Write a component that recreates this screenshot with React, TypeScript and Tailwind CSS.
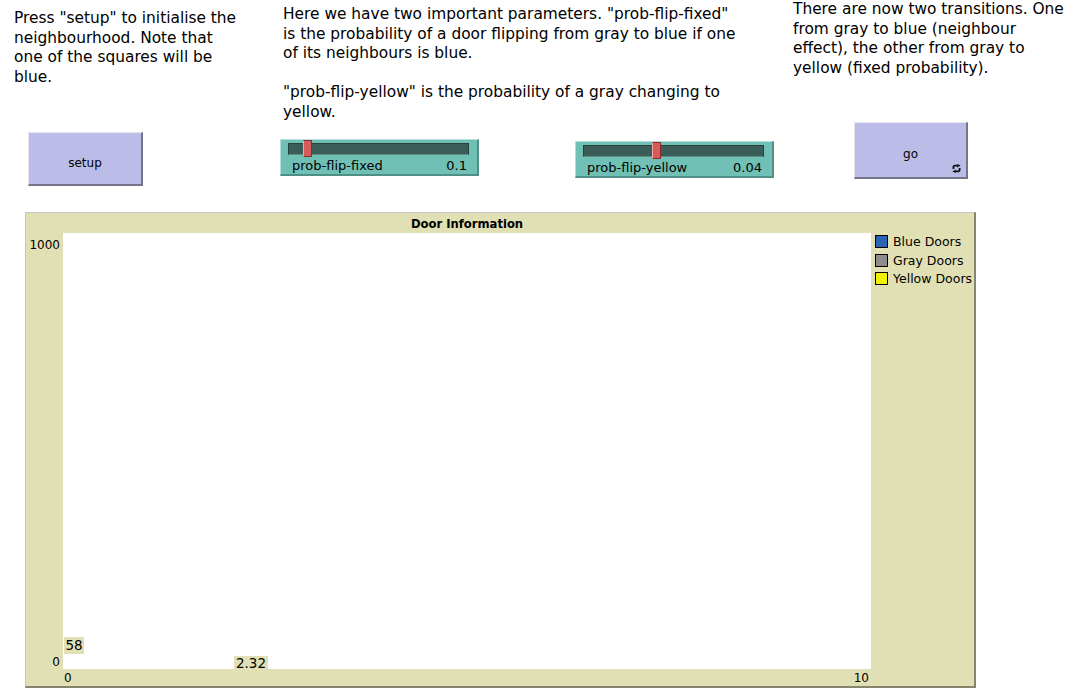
const font = { fontFamily: '"DejaVu Sans", Verdana, sans-serif' };

function ForeverIcon() {
  return (
    <svg width="9" height="9" viewBox="0 0 9 9" className="absolute right-[5px] bottom-[4px]">
      <path d="M1.4 5 V3.2 Q1.4 1.6 3 1.6 H5.6" stroke="#111" strokeWidth="1.8" fill="none" />
      <polygon points="5.2,0 8.6,1.6 5.2,3.4" fill="#111" />
      <path d="M7.6 4 V5.8 Q7.6 7.4 6 7.4 H3.4" stroke="#111" strokeWidth="1.8" fill="none" />
      <polygon points="3.8,5.6 0.4,7.4 3.8,9" fill="#111" />
    </svg>
  );
}

function NlButton({ label, forever, className }: { label: string; forever?: boolean; className: string }) {
  return (
    <div
      className={`relative flex items-center justify-center bg-[#bcbce8] border-t border-l border-[#e4e4ee] border-r-2 border-b-2 border-r-[#74748a] border-b-[#74748a] text-[12px] text-black ${className}`}
    >
      <span className="relative top-[4px]">{label}</span>
      {forever && <ForeverIcon />}
    </div>
  );
}

function NlSlider({ label, value, handle, className }: { label: string; value: string; handle: number; className: string }) {
  return (
    <div
      className={`relative w-[199px] h-[37px] bg-[#70c0b6] border-t border-l border-[#b4e0da] border-r-2 border-b-2 border-r-[#4f8f86] border-b-[#4f8f86] ${className}`}
    >
      <div className="absolute left-[7px] top-[3px] w-[181px] h-[12px] bg-[#3b5d58] border border-[#26413d] border-b-[#5f8e87]" />
      <div
        className="absolute top-0 w-[9px] h-[17px] bg-[#d65c5c] border border-[#8a2a2a] border-l-[#f2a8a8] rounded-[1px]"
        style={{ left: handle }}
      />
      <div className="absolute left-[11px] right-[10px] top-[18px] flex justify-between text-[13px] leading-[16px] text-black">
        <span>{label}</span>
        <span>{value}</span>
      </div>
    </div>
  );
}

export default function App() {
  return (
    <div className="w-[1080px] h-[700px] bg-white overflow-hidden text-black" style={font}>
      {/* notes */}
      <div className="flex items-start h-[122px] text-[15.4px] leading-[19.5px]">
        <p className="ml-[14px] mt-[9px] w-[255px] whitespace-nowrap">
          Press "setup" to initialise the<br />
          neighbourhood. Note that<br />
          one of the squares will be<br />
          blue.
        </p>
        <p className="ml-[14px] mt-[5px] w-[500px] whitespace-nowrap">
          Here we have two important parameters. "prob-flip-fixed"<br />
          is the probability of a door flipping from gray to blue if one<br />
          of its neighbours is blue.<br />
          <br />
          "prob-flip-yellow" is the probability of a gray changing to<br />
          yellow.
        </p>
        <p className="ml-[10px] mt-0 w-[285px] whitespace-nowrap">
          There are now two transitions. One<br />
          from gray to blue (neighbour<br />
          effect), the other from gray to<br />
          yellow (fixed probability).
        </p>
      </div>

      {/* controls */}
      <div className="flex items-start h-[64px]">
        <NlButton label="setup" className="ml-[28px] mt-[10px] w-[115px] h-[54px]" />
        <NlSlider label="prob-flip-fixed" value="0.1" handle={22} className="ml-[137px] mt-[17px]" />
        <NlSlider label="prob-flip-yellow" value="0.04" handle={76} className="ml-[96px] mt-[19px]" />
        <NlButton label="go" forever className="ml-[80px] mt-0 w-[114px] h-[57px]" />
      </div>

      {/* plot */}
      <div className="relative ml-[25px] mt-[26px] w-[951px] h-[476px] bg-[#e0e0b4] border-t border-l border-[#c6c6c6] border-r-2 border-b-2 border-r-[#86866e] border-b-[#86866e]">
        <div className="grid grid-cols-[37px_808px_1fr] grid-rows-[20px_436px_1fr] h-full">
          <div />
          <div className="flex items-center justify-center pt-[3px] text-[11.6px] font-bold">Door Information</div>
          <div />

          <div className="flex flex-col justify-between items-end pr-[3px] text-[12px] leading-[14px]">
            <span className="mt-[5px]">1000</span>
            <span>0</span>
          </div>
          <div className="bg-white" />
          <div className="row-span-2 pl-[4px] pt-[2px] flex flex-col gap-[5.5px] text-[12.5px] leading-[13px]">
            <div className="flex items-center gap-[5px]">
              <span className="w-[13px] h-[13px] bg-[#2a62b4] border border-black" />
              <span>Blue Doors</span>
            </div>
            <div className="flex items-center gap-[5px]">
              <span className="w-[13px] h-[13px] bg-[#8d8d8d] border border-black" />
              <span>Gray Doors</span>
            </div>
            <div className="flex items-center gap-[5px]">
              <span className="w-[13px] h-[13px] bg-[#f1f100] border border-black" />
              <span>Yellow Doors</span>
            </div>
          </div>

          <div />
          <div className="flex justify-between items-center pl-[1px] pr-[2px] text-[12px] leading-[14px]">
            <span>0</span>
            <span>10</span>
          </div>
        </div>

        {/* value tags */}
        <div className="absolute left-[38px] top-[424px] w-[20px] h-[17px] bg-[#e0e0b4] flex items-center justify-center text-[13.5px]">
          58
        </div>
        <div className="absolute left-[208px] top-[443px] w-[34px] h-[15px] bg-[#e0e0b4] flex items-center justify-center text-[13.5px]">
          2.32
        </div>
      </div>
    </div>
  );
}
